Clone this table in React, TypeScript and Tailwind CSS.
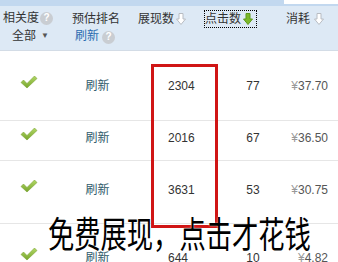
import React from 'react';

const cjk = { fontFamily: '"Liberation Sans", "Noto Sans CJK SC", sans-serif' };

function Help() {
  return (
    <span className="inline-flex w-[13px] h-[13px] rounded-full bg-[#c9cdd2] text-white text-[10px] leading-none items-center justify-center font-bold ml-[1px]">
      ?
    </span>
  );
}

function SortArrow({ active }: { active?: boolean }) {
  return (
    <svg width="10" height="12" viewBox="0 0 10 12" className="ml-[2px]">
      <path
        d="M3 0.5h4v5.5h2.5L5 11.5 0.5 6H3z"
        fill={active ? '#7cb82a' : '#fff'}
        stroke={active ? '#5d9a1c' : '#b8bcc2'}
        strokeWidth="1"
      />
    </svg>
  );
}

function Check() {
  return (
    <svg width="18" height="14" viewBox="0 0 18 14">
      <defs>
        <linearGradient id="ck" x1="0" y1="0" x2="0" y2="1">
          <stop offset="0" stopColor="#b2d865" />
          <stop offset="1" stopColor="#77a52c" />
        </linearGradient>
      </defs>
      <path d="M1 7.5l2.5-2.5 3.5 3.5L14.5 1 17 3.5 7 13z" fill="url(#ck)" stroke="#7ba236" strokeWidth="0.6" />
    </svg>
  );
}

const rows = [
  { show: '2304', click: '77', cost: '37.70', h: 'h-[70px]', pt: 'pt-[27px]' },
  { show: '2016', click: '67', cost: '36.50', h: 'h-[40px]', pt: 'pt-[9px]' },
  { show: '3631', click: '53', cost: '30.75', h: 'h-[63px]', pt: 'pt-[21px]' },
  { show: '644', click: '10', cost: '4.82', h: 'h-[50px]', pt: 'pt-[26px]' },
];

export default function App() {
  return (
    <div className="relative w-[338px] h-[262px] overflow-hidden bg-white text-[12px] text-[#333]" style={cjk}>
      {/* header */}
      <div className="relative h-[51px] bg-[#dde9f5] border-b border-[#d3dce6]">
        <div className="h-[6px] bg-[#c2d8ef] flex justify-end">
          <div className="w-[54px] h-[4px] bg-white" />
        </div>
        <div className="flex pt-[4px]">
          <div className="w-[72px] pl-[3px]">
            <div className="flex items-center h-[16px]">相关度<Help /></div>
            <div className="flex items-center h-[16px] mt-[2px] pl-[9px]">
              全部<span className="ml-[5px] text-[8px] text-[#555]">▼</span>
            </div>
          </div>
          <div className="w-[66px]">
            <div className="flex items-center h-[16px] mt-[1px]">预估排名</div>
            <div className="flex items-center h-[16px] mt-[1px] pl-[3px] text-[#2b6cb0]">
              刷新<span className="ml-[2px]"><Help /></span>
            </div>
          </div>
          <div className="w-[67px] flex items-start">
            <div className="flex items-center h-[16px] mt-[1px]">展现数<SortArrow /></div>
          </div>
          <div className="w-[81px] flex items-start">
            <div className="flex items-center h-[16px] mt-[1px] pr-[3px] outline outline-1 outline-dotted outline-black">
              点击数<SortArrow active />
            </div>
          </div>
          <div className="flex items-start">
            <div className="flex items-center h-[16px] mt-[1px]">消耗<span className="ml-[2px]"><SortArrow /></span></div>
          </div>
        </div>
      </div>

      {/* body rows */}
      {rows.map((r, i) => (
        <div key={i} className={`flex items-start ${r.h} ${r.pt} ${i < 3 ? 'border-b border-[#e6e6e6]' : ''}`}>
          <div className="w-[58px] h-[16px] flex justify-center items-center -mt-[4px]">
            <Check />
          </div>
          <div className="w-[79px] h-[16px] leading-[16px] text-center text-[#2f5a6b]">刷新</div>
          <div className="w-[86px] h-[16px] leading-[16px] pl-[31px]">{r.show}</div>
          <div className="w-[60px] h-[16px] leading-[16px] text-center">{r.click}</div>
          <div className="flex-1 h-[16px] leading-[16px] text-right pr-[10px] text-[#555]">
            <span className="text-[#999]">¥</span>{r.cost}
          </div>
        </div>
      ))}

      {/* red highlight box */}
      <div className="absolute left-[151px] top-[64px] w-[67px] h-[164px] border-[3px] border-[#d01515]" />

      {/* caption overlay */}
      <div className="absolute left-[48px] top-[214px] origin-left scale-x-[0.73] whitespace-nowrap text-[36px] leading-[44px] text-black [text-shadow:0_0_2px_#fff]">
        免费展现，点击才花钱
      </div>
    </div>
  );
}
